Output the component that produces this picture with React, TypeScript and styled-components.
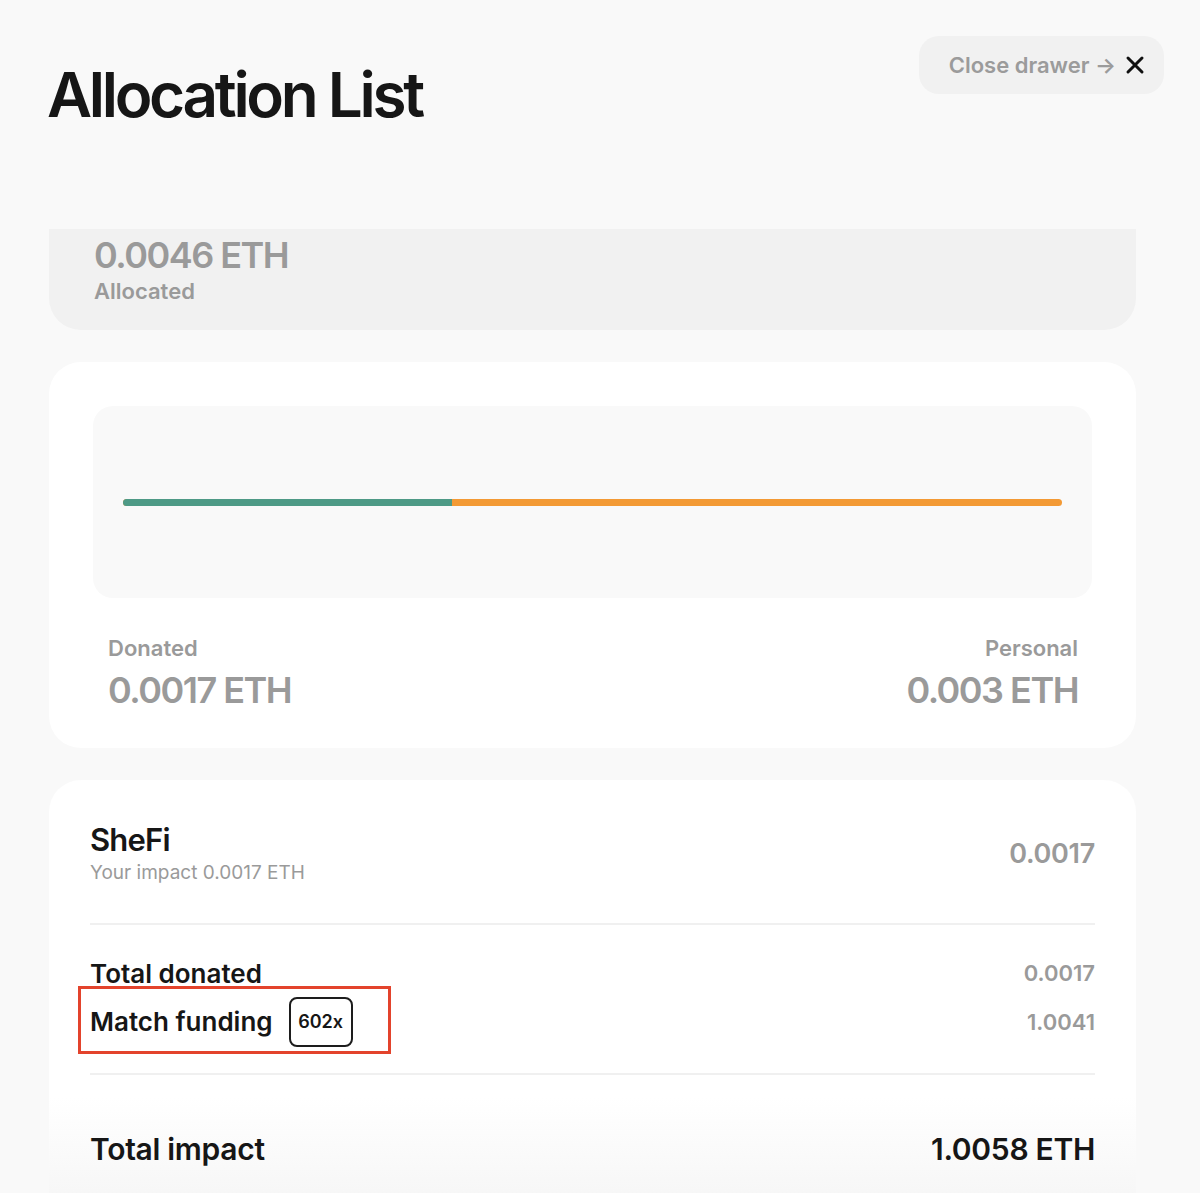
import styled, { createGlobalStyle } from "styled-components";

const GlobalStyle = createGlobalStyle`
  html, body {
    margin: 0;
    padding: 0;
    background: #f9f9f9;
    font-family: Inter, "Noto Sans", sans-serif;
    color: #161616;
    overflow: hidden;
  }
`;

const Page = styled.div`
  padding: 36px 36px 0 49px;
  height: 1193px;
  box-sizing: border-box;
  overflow: hidden;
`;

const Header = styled.div`
  display: flex;
  justify-content: space-between;
  align-items: flex-start;
`;

const Title = styled.h1`
  margin: 28px 0 0 -2px;
  font-size: 62px;
  line-height: 1;
  font-weight: 600;
  letter-spacing: -3.3px;
  color: #161616;
`;

const CloseButton = styled.button`
  display: flex;
  align-items: center;
  gap: 9px;
  height: 58px;
  padding: 0 19px 0 30px;
  border: none;
  border-radius: 20px;
  background: #f1f1f1;
  font-family: inherit;
  font-size: 22px;
  font-weight: 600;
  color: #9b9b9b;
  cursor: pointer;
`;

const Content = styled.div`
  width: 1087px;
  margin-top: 103px;
  display: flex;
  flex-direction: column;
  gap: 32px;
`;

const AllocatedCard = styled.div`
  background: #f1f1f1;
  border-radius: 0 0 32px 32px;
  padding: 5px 45px 0;
  height: 101px;
  box-sizing: border-box;
`;

const BigValue = styled.div<{ $dark?: boolean }>`
  font-size: 36px;
  line-height: 1.2;
  font-weight: 600;
  letter-spacing: -1.5px;
  color: ${(p) => (p.$dark ? "#161616" : "#9a9a9a")};
`;

const SmallLabel = styled.div`
  font-size: 22px;
  line-height: 1.3;
  font-weight: 600;
  color: #9a9a9a;
`;

const Card = styled.div`
  background: #ffffff;
  border-radius: 32px;
`;

const ChartCard = styled(Card)`
  padding: 44px 44px 36px;
`;

const ChartBox = styled.div`
  height: 192px;
  border-radius: 20px;
  background: #f9f9f9;
  padding: 0 30px;
  display: flex;
  align-items: center;
`;

const Bar = styled.div`
  flex: 1;
  height: 7px;
  border-radius: 4px;
  overflow: hidden;
  display: flex;
  background: #f39a35;
`;

const BarPart = styled.div<{ $color: string }>`
  height: 100%;
  background: ${(p) => p.$color};
`;

const Split = styled.div`
  display: flex;
  justify-content: space-between;
  padding: 36px 14px 0 15px;
`;

const SplitItem = styled.div<{ $right?: boolean }>`
  display: flex;
  flex-direction: column;
  gap: 6px;
  align-items: ${(p) => (p.$right ? "flex-end" : "flex-start")};
`;

const ListCard = styled(Card)`
  padding: 40px 41px 60px;
  background: linear-gradient(to bottom, #ffffff calc(100% - 130px), #f4f4f4);
`;

const ProjectRow = styled.div`
  display: flex;
  justify-content: space-between;
  align-items: center;
  padding-bottom: 36px;
  border-bottom: 2px solid #f0f0f0;
`;

const ProjectName = styled.div`
  font-size: 31px;
  line-height: 1.3;
  font-weight: 600;
  letter-spacing: -0.8px;
  color: #161616;
`;

const ProjectSub = styled.div`
  font-size: 19px;
  line-height: 1.4;
  color: #9a9a9a;
`;

const ProjectAmount = styled.div`
  font-size: 27px;
  font-weight: 600;
  letter-spacing: -0.3px;
  color: #9a9a9a;
`;

const Breakdown = styled.div`
  display: flex;
  flex-direction: column;
  gap: 5px;
  padding: 30px 0 26px;
  border-bottom: 2px solid #f0f0f0;
`;

const LineRow = styled.div`
  display: flex;
  justify-content: space-between;
  align-items: center;
  min-height: 37px;
`;

const LineLabel = styled.div`
  position: relative;
  display: flex;
  align-items: center;
  gap: 16px;
  font-size: 26px;
  font-weight: 600;
  color: #161616;
`;

const Highlight = styled(LineLabel)`
  &::after {
    content: "";
    position: absolute;
    left: -12px;
    right: -38px;
    top: -11px;
    bottom: -7px;
    border: 3px solid #e3432c;
  }
`;

const LineValue = styled.div`
  font-size: 22px;
  font-weight: 600;
  color: #9a9a9a;
`;

const Badge = styled.span`
  display: inline-flex;
  align-items: center;
  justify-content: center;
  width: 64px;
  height: 50px;
  box-sizing: border-box;
  border: 2px solid #1d1d1d;
  border-radius: 8px;
  font-size: 18px;
  font-weight: 600;
`;

const TotalRow = styled.div`
  display: flex;
  justify-content: space-between;
  align-items: center;
  padding-top: 56px;
  font-size: 30px;
  font-weight: 600;
  letter-spacing: -0.3px;
  color: #161616;
`;

const CloseIcon = () => (
  <svg width="20" height="20" viewBox="0 0 20 20" fill="none">
    <path
      d="M3 3L17 17M17 3L3 17"
      stroke="#111"
      strokeWidth="3"
      strokeLinecap="round"
    />
  </svg>
);

const donated = 0.0017;
const personal = 0.003;

const App = () => {
  const donatedShare = (donated / (donated + personal)) * 100 - 1.1;

  return (
    <>
      <GlobalStyle />
      <Page>
        <Header>
          <Title>Allocation List</Title>
          <CloseButton>
            Close drawer →
            <CloseIcon />
          </CloseButton>
        </Header>

        <Content>
          <AllocatedCard>
            <BigValue>0.0046 ETH</BigValue>
            <SmallLabel>Allocated</SmallLabel>
          </AllocatedCard>

          <ChartCard>
            <ChartBox>
              <Bar>
                <BarPart $color="#4e9a86" style={{ width: `${donatedShare}%` }} />
              </Bar>
            </ChartBox>
            <Split>
              <SplitItem>
                <SmallLabel>Donated</SmallLabel>
                <BigValue>0.0017 ETH</BigValue>
              </SplitItem>
              <SplitItem $right>
                <SmallLabel>Personal</SmallLabel>
                <BigValue>0.003 ETH</BigValue>
              </SplitItem>
            </Split>
          </ChartCard>

          <ListCard>
            <ProjectRow>
              <div>
                <ProjectName>SheFi</ProjectName>
                <ProjectSub>Your impact 0.0017 ETH</ProjectSub>
              </div>
              <ProjectAmount>0.0017</ProjectAmount>
            </ProjectRow>

            <Breakdown>
              <LineRow>
                <LineLabel>Total donated</LineLabel>
                <LineValue>0.0017</LineValue>
              </LineRow>
              <LineRow>
                <Highlight>
                  Match funding
                  <Badge>602x</Badge>
                </Highlight>
                <LineValue>1.0041</LineValue>
              </LineRow>
            </Breakdown>

            <TotalRow>
              <span>Total impact</span>
              <span>1.0058 ETH</span>
            </TotalRow>
          </ListCard>
        </Content>
      </Page>
    </>
  );
};

export default App;
